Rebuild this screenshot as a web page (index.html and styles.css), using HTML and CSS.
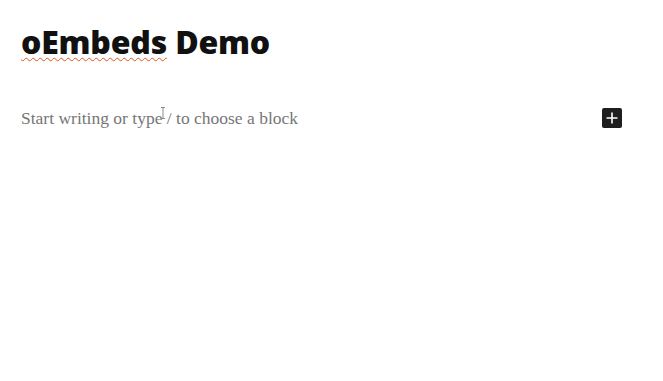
FILE: index.html
```html
<!DOCTYPE html>
<html>
<head>
<meta charset="utf-8">
<link rel="stylesheet" href="styles.css">
</head>
<body>
<div class="editor">
  <h1 class="title"><span class="misspelled">oEmbeds</span> Demo</h1>
  <div class="block-row">
    <p class="placeholder">Start writing or type / to choose a block</p>
    <button class="inserter" aria-label="Add block">
      <svg width="20" height="20" viewBox="0 0 20 20"><path d="M10 4.5v11M4.5 10h11" stroke="#fff" stroke-width="1.6" fill="none"/></svg>
    </button>
    <svg class="cursor" width="6" height="12" viewBox="0 0 6 12"><path d="M1 .5h4M3 .5v11M1 11.5h4" stroke="#8a8a8a" stroke-width="1" fill="none"/></svg>
  </div>
</div>
</body>
</html>
```
FILE: styles.css
```css
html, body {
  margin: 0;
  padding: 0;
  background: #fff;
}
.editor {
  padding: 21px 41px 0 21px;
}
.title {
  margin: 0;
  font-family: "Open Sans", "Noto Sans", sans-serif;
  font-weight: 800;
  font-size: 32px;
  line-height: 42px;
  color: #111;
  letter-spacing: -0.2px;
}
.misspelled {
  text-decoration: underline wavy #e0551c;
  text-decoration-thickness: 1px;
  text-underline-offset: 3px;
}
.block-row {
  position: relative;
  margin-top: 45px;
  display: flex;
  align-items: center;
  justify-content: space-between;
}
.placeholder {
  margin: 0;
  font-family: "Liberation Serif", serif;
  font-size: 17.5px;
  line-height: 20px;
  color: #767676;
}
.inserter {
  width: 20px;
  height: 20px;
  padding: 0;
  border: 0;
  border-radius: 2px;
  background: #1e1e1e;
  display: flex;
  align-items: center;
  justify-content: center;
  margin-top: -1px;
}
.cursor {
  position: absolute;
  left: 139px;
  top: -1px;
}
```
